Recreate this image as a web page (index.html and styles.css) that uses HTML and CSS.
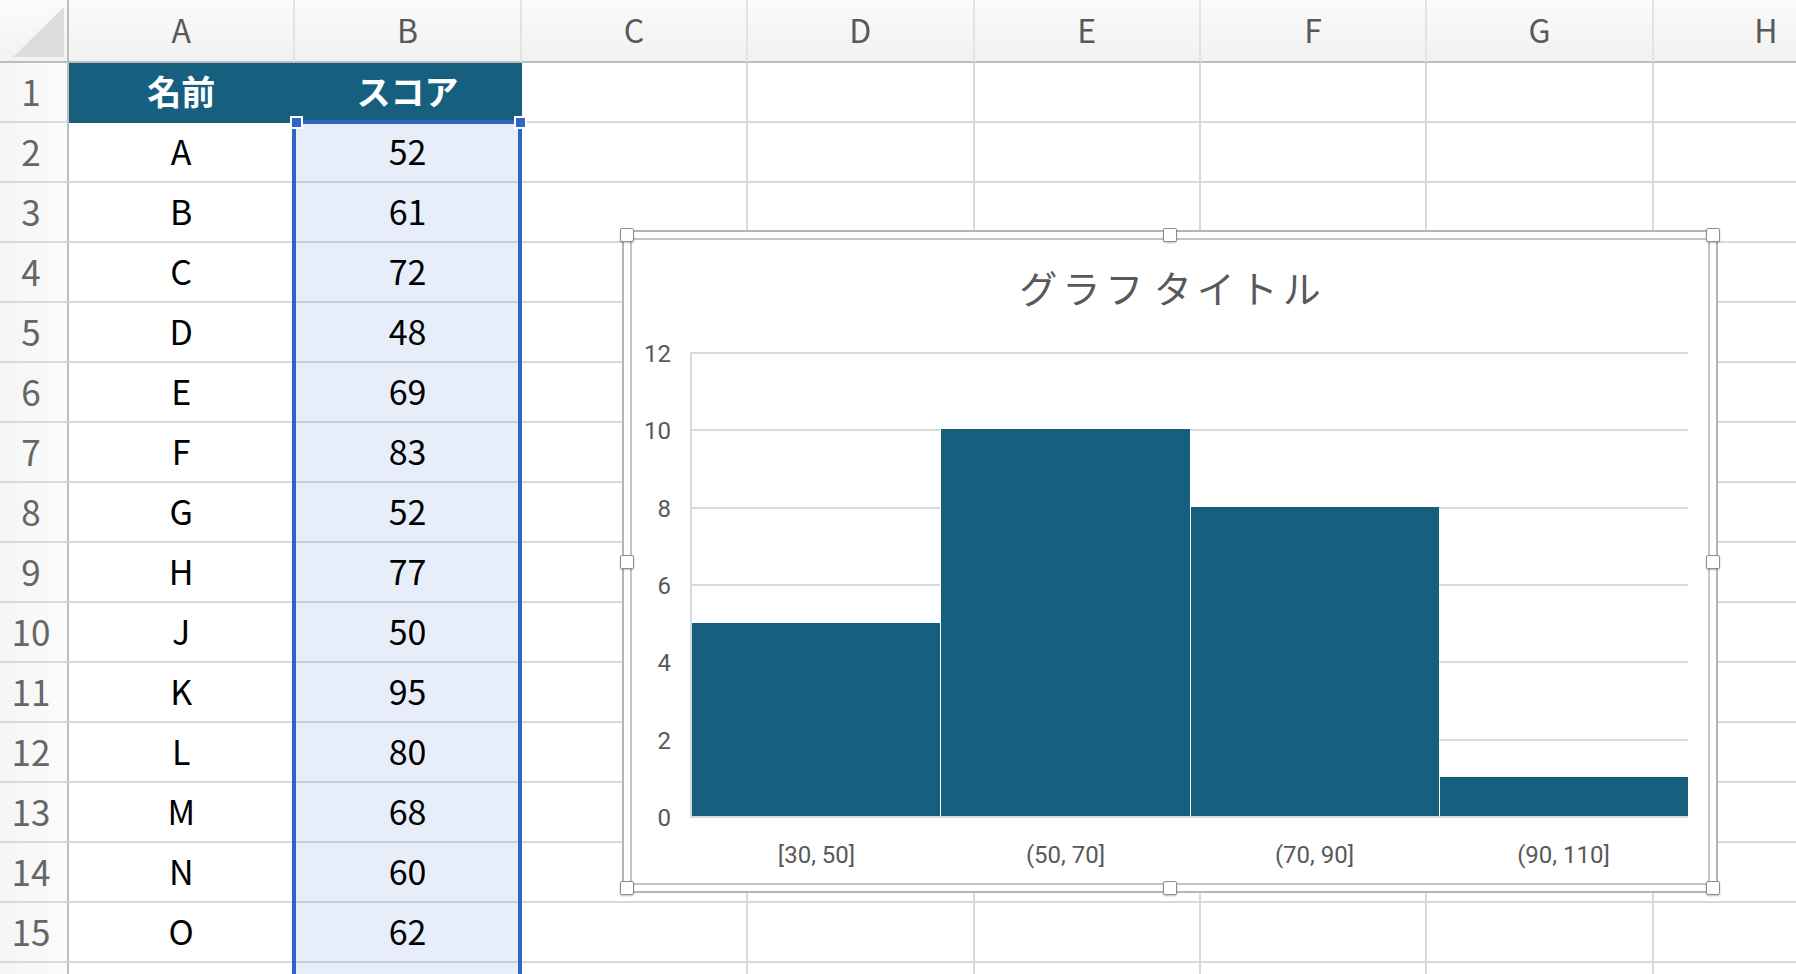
FILE: index.html
```html
<!DOCTYPE html>
<html lang="ja">
<head>
  <meta charset="UTF-8">
  <title>スコア ヒストグラム</title>
  <link rel="stylesheet" href="styles.css">
</head>
<body>

<div class="sheet">
  <div class="corner"></div>
  <div class="col-head">A</div><div class="col-head">B</div><div class="col-head">C</div><div class="col-head">D</div>
  <div class="col-head">E</div><div class="col-head">F</div><div class="col-head">G</div><div class="col-head">H</div>

  <div class="row-num">1</div><div class="cell head">名前</div><div class="cell head">スコア</div>
  <div class="cell"></div><div class="cell"></div><div class="cell"></div><div class="cell"></div><div class="cell"></div><div class="cell"></div>

  <div class="row-num">2</div><div class="cell">A</div><div class="cell sel">52</div>
  <div class="cell"></div><div class="cell"></div><div class="cell"></div><div class="cell"></div><div class="cell"></div><div class="cell"></div>

  <div class="row-num">3</div><div class="cell">B</div><div class="cell sel">61</div>
  <div class="cell"></div><div class="cell"></div><div class="cell"></div><div class="cell"></div><div class="cell"></div><div class="cell"></div>

  <div class="row-num">4</div><div class="cell">C</div><div class="cell sel">72</div>
  <div class="cell"></div><div class="cell"></div><div class="cell"></div><div class="cell"></div><div class="cell"></div><div class="cell"></div>

  <div class="row-num">5</div><div class="cell">D</div><div class="cell sel">48</div>
  <div class="cell"></div><div class="cell"></div><div class="cell"></div><div class="cell"></div><div class="cell"></div><div class="cell"></div>

  <div class="row-num">6</div><div class="cell">E</div><div class="cell sel">69</div>
  <div class="cell"></div><div class="cell"></div><div class="cell"></div><div class="cell"></div><div class="cell"></div><div class="cell"></div>

  <div class="row-num">7</div><div class="cell">F</div><div class="cell sel">83</div>
  <div class="cell"></div><div class="cell"></div><div class="cell"></div><div class="cell"></div><div class="cell"></div><div class="cell"></div>

  <div class="row-num">8</div><div class="cell">G</div><div class="cell sel">52</div>
  <div class="cell"></div><div class="cell"></div><div class="cell"></div><div class="cell"></div><div class="cell"></div><div class="cell"></div>

  <div class="row-num">9</div><div class="cell">H</div><div class="cell sel">77</div>
  <div class="cell"></div><div class="cell"></div><div class="cell"></div><div class="cell"></div><div class="cell"></div><div class="cell"></div>

  <div class="row-num">10</div><div class="cell">J</div><div class="cell sel">50</div>
  <div class="cell"></div><div class="cell"></div><div class="cell"></div><div class="cell"></div><div class="cell"></div><div class="cell"></div>

  <div class="row-num">11</div><div class="cell">K</div><div class="cell sel">95</div>
  <div class="cell"></div><div class="cell"></div><div class="cell"></div><div class="cell"></div><div class="cell"></div><div class="cell"></div>

  <div class="row-num">12</div><div class="cell">L</div><div class="cell sel">80</div>
  <div class="cell"></div><div class="cell"></div><div class="cell"></div><div class="cell"></div><div class="cell"></div><div class="cell"></div>

  <div class="row-num">13</div><div class="cell">M</div><div class="cell sel">68</div>
  <div class="cell"></div><div class="cell"></div><div class="cell"></div><div class="cell"></div><div class="cell"></div><div class="cell"></div>

  <div class="row-num">14</div><div class="cell">N</div><div class="cell sel">60</div>
  <div class="cell"></div><div class="cell"></div><div class="cell"></div><div class="cell"></div><div class="cell"></div><div class="cell"></div>

  <div class="row-num">15</div><div class="cell">O</div><div class="cell sel">62</div>
  <div class="cell"></div><div class="cell"></div><div class="cell"></div><div class="cell"></div><div class="cell"></div><div class="cell"></div>

  <div class="row-num"></div><div class="cell"></div><div class="cell sel"></div>
  <div class="cell"></div><div class="cell"></div><div class="cell"></div><div class="cell"></div><div class="cell"></div><div class="cell"></div>

  <!-- selected range B2:B... -->
  <div class="selection"></div>
  <div class="sel-handle sel-left"></div>
  <div class="sel-handle sel-right"></div>

  <!-- histogram chart -->
  <div class="chart-frame">
    <div class="chart">
      <div class="chart-title">グラフ タイトル</div>
      <div class="plot-row">
        <div class="y-axis">
          <span>12</span><span>10</span><span>8</span><span>6</span><span>4</span><span>2</span><span>0</span>
        </div>
        <div class="plot">
          <div class="bar" style="height: 193.33px"></div>
          <div class="bar" style="height: 386.67px"></div>
          <div class="bar" style="height: 309.33px"></div>
          <div class="bar" style="height: 38.67px"></div>
        </div>
      </div>
      <div class="x-axis">
        <span>[30, 50]</span><span>(50, 70]</span><span>(70, 90]</span><span>(90, 110]</span>
      </div>
    </div>

    <div class="handle h-tl"></div>
    <div class="handle h-tc"></div>
    <div class="handle h-tr"></div>
    <div class="handle h-ml"></div>
    <div class="handle h-mr"></div>
    <div class="handle h-bl"></div>
    <div class="handle h-bc"></div>
    <div class="handle h-br"></div>
  </div>
</div>

</body>
</html>
```

FILE: styles.css
```css
html, body {
  margin: 0;
  height: 974px;
  overflow: hidden;
  background: #fff;
}

body {
  font-family: "Noto Sans CJK JP", sans-serif;
}

.sheet {
  position: relative;
  display: grid;
  grid-template-columns: 69px repeat(8, 226.4px);
  grid-template-rows: 63px;
  grid-auto-rows: 60px;
  width: 1796px;
  height: 974px;
  overflow: hidden;
}

.corner {
  box-sizing: border-box;
  background: linear-gradient(#fbfbfb, #f2f2f2);
  border-right: 2px solid #bdbdbd;
  border-bottom: 2px solid #bdbdbd;
}

.corner::after {
  content: "";
  display: block;
  margin: 7px 0 0 13px;
  width: 51px;
  height: 50px;
  background: #dcdcdc;
  clip-path: polygon(100% 0, 100% 100%, 0 100%);
}

.col-head {
  box-sizing: border-box;
  background: linear-gradient(#fbfbfb, #f1f1f1);
  border-right: 2px solid #e3e3e3;
  border-bottom: 2px solid #bdbdbd;
  text-align: center;
  line-height: 58px;
  font-size: 32px;
  color: #595959;
}

.row-num {
  box-sizing: border-box;
  background: linear-gradient(to right, #f5f5f5, #fbfbfb);
  border-right: 2px solid #bdbdbd;
  border-bottom: 2px solid #dadada;
  padding-right: 5px;
  text-align: center;
  line-height: 56px;
  font-size: 35px;
  color: #666;
}

.cell {
  box-sizing: border-box;
  border-right: 2px solid #d9d9d9;
  border-bottom: 2px solid #d9d9d9;
  text-align: center;
  line-height: 56px;
  font-size: 34px;
  color: #000;
}

.cell.head {
  background: #175f7f;
  border-color: #175f7f;
  color: #fff;
  font-weight: bold;
}

.cell.sel {
  background: #e8eef9;
  border-bottom-color: #c6ccd8;
}

.selection {
  position: absolute;
  left: 292px;
  top: 120px;
  width: 230px;
  height: 900px;
  box-sizing: border-box;
  border: 4px solid #2f66c6;
}

.sel-handle {
  position: absolute;
  top: 116px;
  width: 13px;
  height: 13px;
  box-sizing: border-box;
  background: #2f66c6;
  border: 2px solid #fff;
}

.sel-left { left: 290px; }
.sel-right { left: 514px; }

/* chart */
.chart-frame {
  position: absolute;
  left: 622px;
  top: 230px;
  width: 1096px;
  height: 663px;
  box-sizing: border-box;
  border: 2px solid #b5b5b5;
  padding: 6px;
  background: #fff;
}

.chart {
  height: 100%;
  box-sizing: border-box;
  border: 2px solid #c4c4c4;
}

.chart-title {
  padding: 22px 0 0 5px;
  height: 50px;
  line-height: 50px;
  text-align: center;
  font-size: 38px;
  letter-spacing: 5px;
  word-spacing: -8px;
  color: #595959;
}

.plot-row {
  display: flex;
  margin-top: 40px;
}

.y-axis {
  width: 39px;
  height: 464px;
  margin-top: 2px;
  display: flex;
  flex-direction: column;
  justify-content: space-between;
  align-items: flex-end;
  font-family: Roboto, sans-serif;
  font-size: 24px;
  color: #595959;
}

.y-axis span {
  height: 0;
  line-height: 0;
}

.plot {
  margin-left: 19px;
  width: 996px;
  height: 464px;
  padding-bottom: 2px;
  border-left: 2px solid #d9d9d9;
  background: repeating-linear-gradient(#dadada 0 2px, transparent 2px 77.333px);
  display: flex;
  align-items: flex-end;
}

.bar {
  flex: 1;
  box-sizing: border-box;
  background: #175f7f;
}

.bar + .bar {
  border-left: 1px solid #fff;
}

.x-axis {
  display: flex;
  margin: 22px 0 0 60px;
  width: 996px;
  line-height: 30px;
  font-family: Roboto, sans-serif;
  font-size: 24px;
  color: #595959;
}

.x-axis span {
  flex: 1;
  text-align: center;
}

.handle {
  position: absolute;
  width: 14px;
  height: 14px;
  box-sizing: border-box;
  background: #fff;
  border: 1px solid #8e8e8e;
  border-radius: 2px;
  box-shadow: 0 1px 2px rgba(0, 0, 0, 0.25);
}

.h-tl { left: -4px; top: -4px; }
.h-tc { left: calc(50% - 7px); top: -4px; }
.h-tr { right: -4px; top: -4px; }
.h-ml { left: -4px; top: calc(50% - 7px); }
.h-mr { right: -4px; top: calc(50% - 7px); }
.h-bl { left: -4px; bottom: -4px; }
.h-bc { left: calc(50% - 7px); bottom: -4px; }
.h-br { right: -4px; bottom: -4px; }
```
